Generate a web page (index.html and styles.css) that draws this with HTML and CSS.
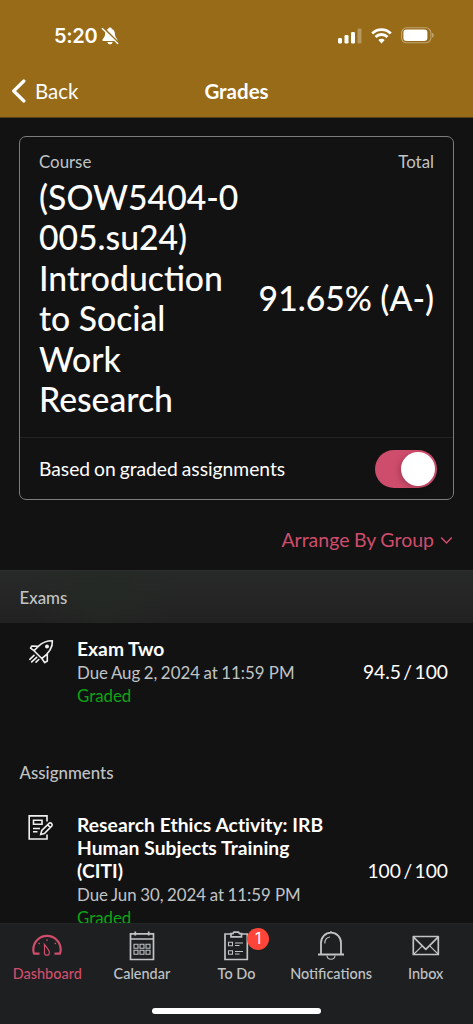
FILE: index.html
```html
<!DOCTYPE html>
<html lang="en">
<head>
<meta charset="utf-8">
<title>Grades</title>
<link rel="stylesheet" href="styles.css">
</head>
<body>
<div class="screen">
  <header class="header">
    <div class="status">
      <div class="clock"><span class="time">5:20</span>
        <svg class="mute" width="18" height="18" viewBox="0 0 18 18"><path d="M9 .5c-1 0-1.700.6-1.800 1.400C4.700 2.700 4 5 4 7.500 3.900 10.700 1.400 11.800 1.400 13.200c0 .4.300.7.800.7h13.600c.5 0 .8-.3.800-.7 0-1.400-2.500-2.500-2.600-5.700 0-2.500-.7-4.800-3.200-5.600C10.700 1.100 10 .5 9 .5zM6.300 15c.3 1.500 1.400 2.300 2.700 2.300s2.400-.8 2.700-2.300z" fill="#fff"/><path d="M2 .8 17.600 16.200" stroke="#976b18" stroke-width="2.400"/><path d="M1.300 1.500 16.700 16.600" stroke="#fff" stroke-width="1.400" stroke-linecap="round"/></svg>
      </div>
      <div class="indicators">
        <svg width="24" height="16" viewBox="0 0 24 16" fill="#fff"><rect x="0" y="10" width="4" height="5.500" rx="1.200"/><rect x="6.500" y="7" width="4" height="8.500" rx="1.200"/><rect x="13" y="4" width="4" height="11.500" rx="1.200"/><rect x="19.500" y="0.500" width="4" height="15" rx="1.200" opacity=".3"/></svg>
        <svg width="21" height="16" viewBox="0 0 21 16" fill="none" stroke="#fff" stroke-width="2.800"><path d="M1.200 5.400a13.200 13.200 0 0 1 18.600 0M4.500 9a8.500 8.500 0 0 1 12 0"/><path d="M7.300 12.100a4.500 4.500 0 0 1 6.400 0L10.500 15.400z" fill="#fff" stroke="none"/></svg>
        <svg class="battery" width="34" height="17" viewBox="0 0 34 17"><rect x=".6" y=".8" width="29.300" height="15" rx="5" fill="none" stroke="#fff" stroke-width="1.100" opacity=".4"/><rect x="2.400" y="2.600" width="24" height="11.400" rx="3.200" fill="#fff"/><path d="M31.200 5.800c2 .8 2 4.200 0 5z" fill="#fff" opacity=".45"/></svg>
      </div>
    </div>
    <div class="navbar">
      <div class="back"><svg width="15" height="24" viewBox="0 0 15 24"><path d="M12.900 2 2.700 12l10.200 10" fill="none" stroke="#fff" stroke-width="3.200" stroke-linecap="round" stroke-linejoin="round"/></svg><span>Back</span></div>
      <h1>Grades</h1>
    </div>
  </header>

  <main class="content">
    <section class="card">
      <div class="summary">
        <div class="labels"><span>Course</span><span>Total</span></div>
        <div class="values">
          <div class="course">(SOW5404-0<br>005.su24)<br>Introduction<br>to Social<br>Work<br>Research</div>
          <div class="total">91.65% (A-)</div>
        </div>
      </div>
      <div class="option"><span>Based on graded assignments</span><span class="switch"><span class="knob"></span></span></div>
    </section>

    <div class="arrange"><span>Arrange By Group</span><svg width="13" height="9" viewBox="0 0 13 9"><path d="M1.200 1.500 6.500 7l5.300-5.500" fill="none" stroke="#cf4d6c" stroke-width="1.500"/></svg></div>

    <h2 class="section pinned">Exams</h2>
    <article class="row exam">
      <svg class="icon" width="26" height="26" viewBox="0 0 26 26" fill="none" stroke="#f0f0f0" stroke-width="1.600" stroke-linejoin="round" stroke-linecap="round"><path d="M10.300 7.400C14 3.600 18 1.700 24.400 1.700c.5 7.500-4.100 13-10.600 17.800L6 11.700zM10.300 7.400 3.800 7 2.500 9.200 6 11.700M19.300 14.700v7.300l-2.500 1.700-3-4.200M6 16.300l-4.200 4M8.700 18.300l-5 4.600M10.800 20.500l-2.800 2.600"/><circle cx="19" cy="7.400" r="1.200" fill="#f0f0f0"/></svg>
      <div class="details"><h3>Exam Two</h3><p>Due Aug 2, 2024 at 11:59&#8239;PM</p><p class="graded">Graded</p></div>
      <span class="score">94.5 / 100</span>
    </article>
    <h2 class="section plain">Assignments</h2>
    <article class="row">
      <svg class="icon" width="26" height="26" viewBox="0 0 26 26" fill="none" stroke="#f0f0f0" stroke-width="1.600"><path d="M19 6.500V.9H1.200V24H19V19.500M5.500 5.200H14v4H5.500zM5 13.500h7M5 16.800h4.500"/><path d="m12.700 19.500 1.100-4.200 7.700-7.300q1.200-.5 2.100.5t.4 2.200L16.400 18.600zM19.600 9.700l2.900 2.900"/></svg>
      <div class="details"><h3 class="long">Research Ethics Activity: IRB<br>Human Subjects Training<br>(CITI)</h3><p>Due Jun 30, 2024 at 11:59&#8239;PM</p><p class="graded">Graded</p></div>
      <span class="score">100 / 100</span>
    </article>
  </main>

  <footer class="footer">
    <nav class="tabs">
      <div class="tab active"><svg width="30" height="30" viewBox="0 0 30 30" fill="none" stroke="currentColor" stroke-width="2.200"><path d="M7.500 22.600H2c-.4-1.200-.7-2.300-.7-3.800C1.300 11 7.300 4.900 15 4.900S28.700 11 28.700 18.800c0 1.500-.3 2.600-.7 3.800h-5.500" stroke-linejoin="round"/><path d="M12.400 13.500c2.500 3 5 5.700 5 8.200a2.500 2.500 0 0 1-5 0c0-2.500.5-4.200 0-8.200zM15 8.200v1.900M6.600 12l1.200 1M22.700 13l1.200-1" stroke-width="1.200"/></svg><span>Dashboard</span></div>
      <div class="tab"><svg width="30" height="30" viewBox="0 0 30 30" fill="none" stroke="currentColor" stroke-width="1.700"><path d="M3.500 2.800h23v25.700h-23zM3.500 8h23M8.300.5v4M21.700.5v4"/><path d="M7 13.300h4v4H7zM13 13.300h4v4h-4zM19 13.300h4v4h-4zM7 19.300h4v4H7zM13 19.300h4v4h-4zM19 19.300h4v4h-4z" stroke-width="1.100"/></svg><span>Calendar</span></div>
      <div class="tab"><svg width="30" height="30" viewBox="0 0 30 30" fill="none" stroke="currentColor" stroke-width="1.700"><path d="M10 3H4v25.500h22.300V3h-6M10 5.900h10.500V2.700h-2l-1-1.600h-4.600l-1 1.600H10z"/><path d="M7.500 11.300h4v3.500h-4zM7.500 19.700h4v3.500h-4zM14 12h8M14 14.500h4.500M14 20.500h8M14 23h4.500" stroke-width="1.100"/></svg><span class="badge">1</span><span>To Do</span></div>
      <div class="tab"><svg width="30" height="30" viewBox="0 0 30 30" fill="none" stroke="currentColor" stroke-width="1.800"><path d="M2 23.500h26M5 23.100V12a10 10.300 0 0 1 20 0v11.100M15 2V.3"/><path d="M11 24.500c.2 2.500 1.700 3.800 4 3.800s3.800-1.300 4-3.800M8.800 12.500c0-4 1.800-6.200 5.200-6.500" stroke-width="1.100"/></svg><span>Notifications</span></div>
      <div class="tab"><svg width="30" height="30" viewBox="0 0 30 30" fill="none" stroke="currentColor" stroke-width="1.700" stroke-linejoin="round"><path d="M2.300 5.500h25v18h-25zM2.300 5.800 14.800 18.300 27.300 5.800"/><path d="m3 23 8-7.800M27 23l-8-7.800" stroke-width="1.100"/></svg><span>Inbox</span></div>
    </nav>
    <div class="home"></div>
  </footer>
</div>
</body>
</html>
```
FILE: styles.css
```css
* { box-sizing: border-box; }
body { margin: 0; background: #121212; color: #fff; font-family: Lato, sans-serif; }
h1, h2, h3, p { margin: 0; font-weight: 400; }
svg { display: block; flex: none; }
.screen { width: 473px; height: 1024px; display: flex; flex-direction: column; overflow: hidden; background: #121212; }

.header { flex: none; height: 118px; background: #976b18; border-bottom: 1px solid #56401a; }
.status { height: 64px; padding: 7px 38px 0 54px; display: flex; justify-content: space-between; align-items: center; }
.clock { display: flex; align-items: center; gap: 4px; }
.time { font: 600 20px/24px Inter, sans-serif; letter-spacing: -.3px; }
.indicators { display: flex; align-items: center; gap: 9px; }
.navbar { height: 54px; padding: 0 11px; display: grid; grid-template-columns: 1fr auto 1fr; align-items: center; }
.back { display: flex; align-items: center; gap: 9px; font-size: 20.500px; line-height: 24px; }
.navbar h1 { font-size: 20.500px; line-height: 24px; font-weight: 700; }

.content { flex: 1; min-height: 0; overflow: hidden; padding-top: 18px; }
.card { margin: 0 19px; height: 364px; border: 1px solid #7c7c7c; border-radius: 7px; display: flex; flex-direction: column; }
.summary { height: 301px; padding: 14px 19px 0; border-bottom: 1px solid #242424; }
.labels { display: flex; justify-content: space-between; font-size: 16.850px; line-height: 22px; color: #c0c4c6; }
.values { margin-top: 4px; display: flex; align-items: center; justify-content: space-between; font-size: 33.700px; line-height: 40.400px; font-weight: 500; white-space: nowrap; }
.option { flex: 1; display: flex; align-items: center; justify-content: space-between; padding: 0 16px 0 19px; font-size: 19.260px; word-spacing: -1px; }
.switch { width: 62px; height: 38px; padding: 2px; border-radius: 19px; background: #cf4d6c; display: flex; justify-content: flex-end; }
.knob { width: 34px; height: 34px; border-radius: 50%; background: #fff; box-shadow: -2px 2px 6px rgba(0,0,0,.2); }
.arrange { height: 70px; padding: 10px 20px 0 0; display: flex; justify-content: flex-end; align-items: center; gap: 6px; font-size: 19.500px; line-height: 24px; word-spacing: -.5px; color: #cf4d6c; }
.section { padding-left: 19.500px; font-size: 16.850px; line-height: 20px; font-weight: 500; color: #c0c4c6; display: flex; align-items: center; }
.pinned { height: 53px; padding-top: 1px; background: radial-gradient(ellipse 80px 50px at 103px 22px, #242924, transparent), linear-gradient(#282a29, #212121); border-top: 1px solid #2d2e2e; }
.plain { height: 53px; }
.row { display: flex; padding: 14px 25px 0 28px; }
.row.exam { height: 123px; }
.icon { margin-top: 2px; }
.details { flex: 1; margin-left: 23px; font-size: 16.850px; line-height: 23px; color: #c0c4c6; }
.details h3 { font-size: 19.260px; line-height: 23.200px; font-weight: 700; color: #fff; }
.details .long { letter-spacing: .05px; font-variant-ligatures: none; }
.details p { line-height: 23px; word-spacing: -.8px; }
.exam h3 { margin-bottom: 1px; }
.details .graded { color: #0aa516; }
.score { align-self: center; font-size: 19.260px; line-height: 24px; word-spacing: -2.500px; }
.row.exam .score { align-self: flex-start; margin-top: 23px; }

.footer { flex: none; height: 101px; background: #1e1f20; border-top: 1px solid #242526; }
.tabs { display: grid; grid-template-columns: repeat(5, 1fr); height: 85px; color: #c0c4c6; }
.tab { position: relative; display: flex; flex-direction: column; align-items: center; padding-top: 7px; font-size: 14.440px; line-height: 18px; font-weight: 500; gap: 4px; }
.active { color: #cf4d6c; }
.badge { position: absolute; top: 4px; left: 58px; width: 22px; height: 22px; border-radius: 50%; background: #ff453a; color: #fff; text-align: center; font: 400 15.500px/22px Inter, sans-serif; }
.home { width: 169px; height: 6px; border-radius: 3px; background: #fff; margin: -1px auto 0; }
```
